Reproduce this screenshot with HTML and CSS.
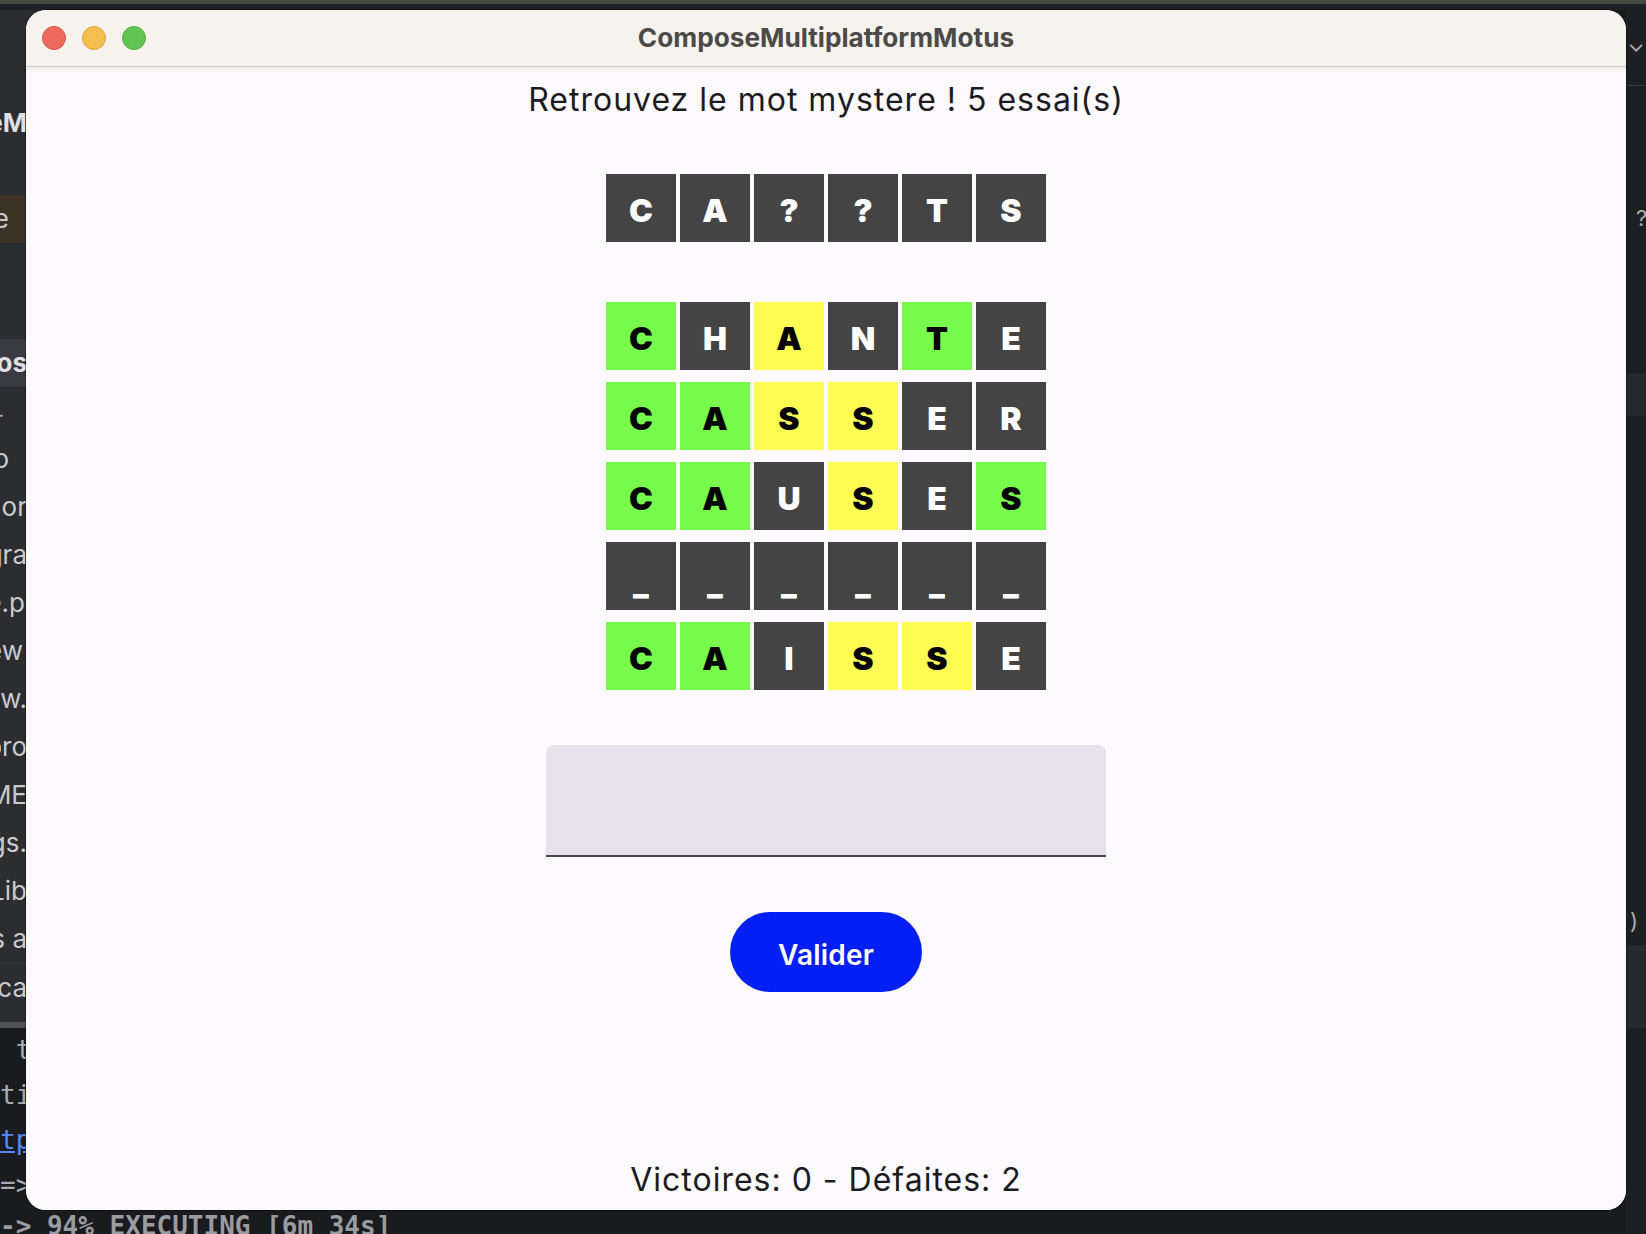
FILE: index.html
```html
<!DOCTYPE html>
<html lang="fr">
<head>
<meta charset="utf-8">
<title>ComposeMultiplatformMotus</title>
<link rel="stylesheet" href="styles.css">
</head>
<body>
<div class="desktop">
  <div class="ide-top"></div>
  <div class="ide-main">
    <div class="ide-left">
      <div class="tree">
        <div class="tl bold">eM</div>
        <div class="tl"></div>
        <div class="tl sel-brown p18">e</div>
        <div class="tl"></div>
        <div class="tl"></div>
        <div class="tl sel-gray bold">os</div>
        <div class="tl small p22">.</div>
        <div class="tl p18">o</div>
        <div class="tl">or</div>
        <div class="tl">gra</div>
        <div class="tl p2">e.p</div>
        <div class="tl p4">ew</div>
        <div class="tl">ew.</div>
        <div class="tl">pro</div>
        <div class="tl">ME</div>
        <div class="tl">gs.</div>
        <div class="tl">Lib</div>
        <div class="tl">s a</div>
        <div class="tl lower">oca</div>
      </div>
      <div class="scrollbar"></div>
      <div class="terminal">
        <div class="term-line"> t</div>
        <div class="term-line">ti</div>
        <div class="term-line link">tp</div>
        <div class="term-line">=&gt;</div>
        <div class="term-line strong">-&gt; 94% EXECUTING [6m 34s]</div>
      </div>
    </div>
    <div class="ide-right">
      <div class="chev">&#8964;</div>
      <div class="rsep"></div>
      <div class="rq">?</div>
      <div class="rband1"></div>
      <div class="rparen">)</div>
      <div class="rband2"></div>
    </div>
  </div>

  <div class="window">
    <div class="titlebar">
      <div class="lights">
        <span class="light red"></span>
        <span class="light yellow"></span>
        <span class="light green"></span>
      </div>
      <div class="title">ComposeMultiplatformMotus</div>
    </div>
    <div class="content">
      <div class="heading">Retrouvez le mot mystere ! 5 essai(s)</div>

      <div class="row secret">
        <div class="tile d">C</div>
        <div class="tile d">A</div>
        <div class="tile d">?</div>
        <div class="tile d">?</div>
        <div class="tile d">T</div>
        <div class="tile d">S</div>
      </div>

      <div class="grid">
        <div class="row">
          <div class="tile g">C</div>
          <div class="tile d">H</div>
          <div class="tile y">A</div>
          <div class="tile d">N</div>
          <div class="tile g">T</div>
          <div class="tile d">E</div>
        </div>
        <div class="row">
          <div class="tile g">C</div>
          <div class="tile g">A</div>
          <div class="tile y">S</div>
          <div class="tile y">S</div>
          <div class="tile d">E</div>
          <div class="tile d">R</div>
        </div>
        <div class="row">
          <div class="tile g">C</div>
          <div class="tile g">A</div>
          <div class="tile d">U</div>
          <div class="tile y">S</div>
          <div class="tile d">E</div>
          <div class="tile g">S</div>
        </div>
        <div class="row">
          <div class="tile d blank">_</div>
          <div class="tile d blank">_</div>
          <div class="tile d blank">_</div>
          <div class="tile d blank">_</div>
          <div class="tile d blank">_</div>
          <div class="tile d blank">_</div>
        </div>
        <div class="row">
          <div class="tile g">C</div>
          <div class="tile g">A</div>
          <div class="tile d">I</div>
          <div class="tile y">S</div>
          <div class="tile y">S</div>
          <div class="tile d">E</div>
        </div>
      </div>

      <div class="field"></div>

      <button class="btn">Valider</button>

      <div class="stats">Victoires: 0 - Défaites: 2</div>
    </div>
  </div>
</div>
</body>
</html>
```

FILE: styles.css
```css
* { box-sizing: border-box; }

html, body {
  margin: 0;
  padding: 0;
  width: 1646px;
  height: 1234px;
  overflow: hidden;
  background: #1a1b1e;
}

.desktop {
  position: relative;
  width: 1646px;
  height: 1234px;
  display: flex;
  flex-direction: column;
  font-family: "Inter", "Noto Sans", sans-serif;
}

/* ---------- IDE behind the window ---------- */
.ide-top {
  height: 10px;
  border-top: 4px solid #45493f;
  background: #1f2023;
  flex: none;
}

.ide-main {
  flex: 1;
  display: flex;
  justify-content: space-between;
}

.ide-left {
  width: 40px;
  display: flex;
  flex-direction: column;
  background: #2b2d30;
}

.tree {
  padding-top: 89px;
  display: flex;
  flex-direction: column;
}

.tl {
  height: 48px;
  width: 27px;
  display: flex;
  align-items: center;
  justify-content: flex-end;
  overflow: hidden;
  white-space: pre;
  color: #c8cacf;
  font-family: "Inter", "Noto Sans", sans-serif;
  font-size: 26px;
  line-height: 48px;
}
.tl.bold { font-weight: 700; color: #dfe1e5; }
.tl.small { font-size: 18px; }
.tl.p18 { padding-right: 18px; }
.tl.p22 { padding-right: 23px; }
.tl.p4 { padding-right: 4px; }
.tl.p2 { padding-right: 2px; }
.tl.sel-brown { background: #3a3326; }
.tl.sel-gray { background: #393b40; }
.tl.lower { border-top: 1px solid #34363a; }

.scrollbar {
  margin-top: 11px;
  height: 6px;
  width: 26px;
  background: #4e5157;
}

.terminal {
  flex: 1;
  background: #1a1b1e;
  display: flex;
  flex-direction: column;
}

.term-line {
  height: 45px;
  line-height: 45px;
  white-space: pre;
  font-family: "DejaVu Sans Mono", "Liberation Mono", monospace;
  font-size: 26px;
  color: #a9abb0;
}
.term-line.link { color: #548af7; text-decoration: underline; }
.term-line.strong { font-weight: 700; color: #9a9ca1; margin-top: -4px; }

.ide-right {
  width: 20px;
  background: #1e1f22;
  display: flex;
  flex-direction: column;
  align-items: flex-end;
  color: #a9abb0;
  font-size: 22px;
}
.chev { margin-top: 21px; height: 26px; width: 20px; text-align: center; line-height: 26px; }
.rsep { margin-top: 28px; height: 1px; width: 20px; background: #393b40; }
.rq { margin-top: 117px; height: 30px; width: 10px; overflow: hidden; line-height: 30px; }
.rband1 { margin-top: 141px; height: 42px; width: 20px; background: #26282b; }
.rparen { margin-top: 490px; height: 30px; width: 16px; line-height: 30px; }
.rband2 { margin-top: 9px; height: 83px; width: 20px; background: #27292c; }

/* ---------- App window ---------- */
.window {
  position: absolute;
  left: 26px;
  top: 10px;
  width: 1600px;
  height: 1200px;
  border-radius: 20px;
  overflow: hidden;
  background: #fcfafd;
  display: flex;
  flex-direction: column;
  box-shadow: 0 0 0 1px rgba(0,0,0,0.35);
}

.titlebar {
  height: 57px;
  flex: none;
  background: #f6f2ee;
  border-bottom: 1px solid #cdcac7;
  position: relative;
  display: flex;
  align-items: center;
  justify-content: center;
}

.lights {
  position: absolute;
  left: 16px;
  top: 16px;
  display: flex;
  gap: 16px;
}
.light {
  width: 24px;
  height: 24px;
  border-radius: 50%;
  display: block;
}
.light.red { background: #ee6a5f; border: 1px solid #d95448; }
.light.yellow { background: #f6be4f; border: 1px solid #dea23a; }
.light.green { background: #61c554; border: 1px solid #4fae44; }

.title {
  font-family: "Inter", "Noto Sans", sans-serif;
  font-weight: 700;
  font-size: 26.2px;
  color: #4b4a49;
  margin-top: -1px;
}

.content {
  flex: 1;
  display: flex;
  flex-direction: column;
  align-items: center;
  padding-top: 13px;
  padding-bottom: 10px;
  background: linear-gradient(#ececec, #fcfafd 6px);
}

.heading {
  font-family: "Inter", "Noto Sans", sans-serif;
  font-size: 32px;
  line-height: 40px;
  letter-spacing: 1px;
  color: #1c1b1f;
}

.row {
  display: flex;
  gap: 4px;
}

.secret { margin-top: 54px; }

.grid {
  margin-top: 60px;
  display: flex;
  flex-direction: column;
  gap: 12px;
}

.tile {
  width: 70px;
  height: 68px;
  display: flex;
  align-items: center;
  justify-content: center;
  padding-top: 6px;
  font-family: "Inter", "Noto Sans", sans-serif;
  font-weight: 900;
  font-size: 32px;
  line-height: 1;
}
.tile.d { background: #444444; color: #ffffff; }
.tile.g { background: #77fb4d; color: #000000; }
.tile.y { background: #fffc53; color: #000000; }
.tile.blank { padding-top: 14px; }

.field {
  margin-top: 55px;
  width: 560px;
  height: 112px;
  background: #e6e1ea;
  border-radius: 8px 8px 0 0;
  border-bottom: 2px solid #49454f;
}

.btn {
  margin-top: 55px;
  width: 192px;
  height: 80px;
  border: none;
  border-radius: 40px;
  background: #041ff4;
  color: #ffffff;
  font-family: "Inter", "Noto Sans", sans-serif;
  font-weight: 600;
  font-size: 28px;
  letter-spacing: 0.2px;
  padding: 5px 0 0 0;
}

.stats {
  margin-top: auto;
  font-family: "Inter", "Noto Sans", sans-serif;
  font-size: 32px;
  line-height: 40px;
  letter-spacing: 1px;
  color: #1c1b1f;
}
```
